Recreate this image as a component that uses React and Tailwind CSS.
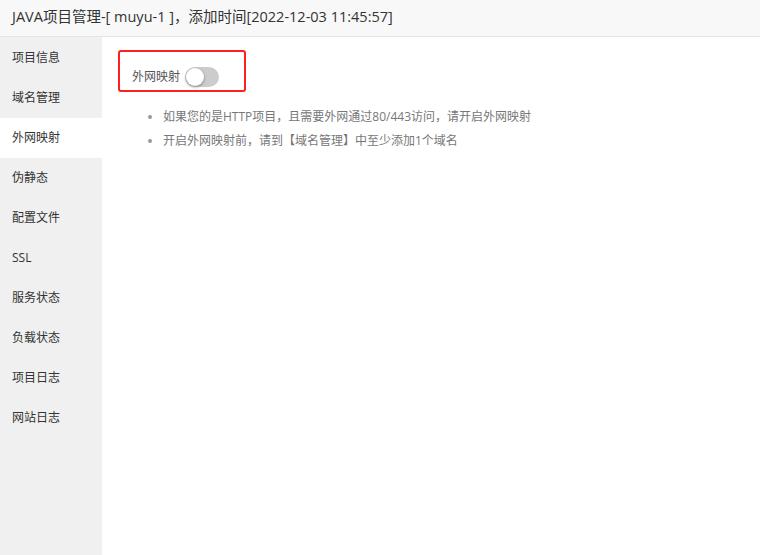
const menu = ["项目信息", "域名管理", "外网映射", "伪静态", "配置文件", "SSL", "服务状态", "负载状态", "项目日志", "网站日志"];

const tips = [
    "如果您的是HTTP项目，且需要外网通过80/443访问，请开启外网映射",
    "开启外网映射前，请到【域名管理】中至少添加1个域名",
];

const Toggle = ({ on }) => (
    <span className={`relative inline-flex h-[20px] w-[34px] items-center rounded-full ${on ? "bg-[#20a53a]" : "bg-[#cccccc]"}`}>
        <span className={`absolute top-[1px] h-[18px] w-[18px] rounded-full bg-white shadow-[0_1px_3px_rgba(0,0,0,0.4)] ${on ? "left-[15px]" : "left-[1px]"}`} />
    </span>
);

export default function App() {
    const active = "外网映射";
    return (
        <div className="flex h-[555px] w-[760px] flex-col bg-white font-['Open_Sans','Noto_Sans_CJK_SC',sans-serif] text-[#333]">
            <div className="flex h-[37px] shrink-0 items-center border-b border-[#e6e6e6] bg-[#f8f8f8] px-[12px] pb-[2px] text-[14.5px]">
                JAVA项目管理-[ muyu-1 ]，添加时间[2022-12-03 11:45:57]
            </div>
            <div className="flex flex-1">
                <div className="w-[102px] shrink-0 bg-[#f0f0f0] pt-[1px]">
                    {menu.map((m) => (
                        <div
                            key={m}
                            className={`flex h-[40px] items-center px-[12px] text-[12px] text-[#333] ${m === active ? "bg-white" : ""}`}
                        >
                            {m}
                        </div>
                    ))}
                </div>
                <div className="flex-1 px-[16px] pt-[13px]">
                    <div className="flex h-[42px] w-[128px] items-center rounded-[3px] border-[2.5px] border-[#ff1f1f] pl-[12px] pt-[12px]">
                        <span className="mr-[5px] text-[12px] text-[#555]">外网映射</span>
                        <Toggle on={false} />
                    </div>
                    <ul className="mt-[13px] list-disc pl-[45px] text-[12px] leading-[24px] text-[#777] marker:text-[#999]">
                        {tips.map((t) => (
                            <li key={t}>{t}</li>
                        ))}
                    </ul>
                </div>
            </div>
        </div>
    );
}
